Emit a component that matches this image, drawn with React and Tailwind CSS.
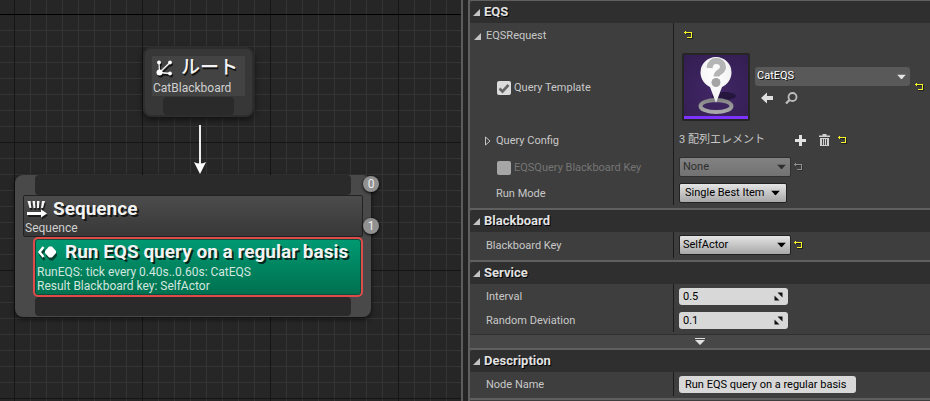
import React, { useState } from 'react';

const ResetIcon = ({ dim }) => (
  <svg width="9" height="8" viewBox="0 0 9 8" shapeRendering="crispEdges" className="block">
    <path d="M1 2h8v6H3V7h5V3H1z" fill="#111" opacity={dim ? 0.3 : 0.7} />
    <path d="M0 1h8v6H3V6h4V2H2v1H1V2H0zM1 0h1v1H1z" fill={dim ? '#8f8f8f' : '#f5f52a'} />
  </svg>
);

const ResetButton = ({ label, dim, className = '' }) => (
  <button type="button" aria-label={`Reset ${label}`} disabled={dim} className={`shrink-0 ${className}`}>
    <ResetIcon dim={dim} />
  </button>
);

const Caret = ({ color = '#000', className = '' }) => (
  <svg width="9" height="5" viewBox="0 0 9 5" className={`pointer-events-none absolute top-1/2 -translate-y-1/2 ${className}`}>
    <path d="M0 0h9L4.5 5z" fill={color} />
  </svg>
);

const OpenTriangle = () => (
  <svg width="7" height="7" viewBox="0 0 7 7" className="shrink-0">
    <path d="M7 0v7H0z" fill="#c4c4c4" />
  </svg>
);

const SpinIcon = () => (
  <svg width="9" height="9" viewBox="0 0 9 9" className="pointer-events-none absolute right-[5px] top-1">
    <path d="M3.5 0.5H8.5V5.5zM0.5 3.5V8.5H5.5z" fill="#111" />
  </svg>
);

// Collapsible category of the details panel
const Category = ({ title, children }) => {
  const [open, setOpen] = useState(true);
  return (
    <section className="border-b-2 border-[#5f5f5f]">
      <h2>
        <button
          type="button"
          aria-expanded={open}
          onClick={() => setOpen(!open)}
          className="flex h-[22px] w-full items-center gap-1 rounded-tl bg-[#2f2f2f] pl-[3px] text-left text-[13px] font-bold text-[#e2e2e2] [text-shadow:1px_1px_0_#000]"
        >
          <OpenTriangle />
          {title}
        </button>
      </h2>
      {open && children}
    </section>
  );
};

const Row = ({ label, height = 'h-6', children }) => (
  <div className={`grid grid-cols-[203fr_257fr] ${height}`}>
    <div className="flex items-center pt-[2px]">{label}</div>
    <div className="flex items-center border-l border-[#1c1c1c] pl-[5px]">{children}</div>
  </div>
);

const Dropdown = ({ id, label, value, disabled, width, pad = 'pl-[3px]' }) => (
  <div className={`relative h-5 ${width}`}>
    <select
      id={id}
      aria-label={label}
      disabled={disabled}
      defaultValue={value}
      className={`block h-5 w-full appearance-none rounded-[2px] border leading-[18px] ${pad} ${
        disabled
          ? 'border-[#303030] bg-linear-to-b from-[#828282] to-[#727272] text-[#2e2e2e]'
          : 'border-[#222] bg-linear-to-b from-[#e4e4e4] to-[#a8a8a8] text-black'
      }`}
    >
      <option>{value}</option>
    </select>
    <Caret color={disabled ? '#2e2e2e' : '#000'} className={pad === 'pl-[3px]' ? 'right-[5px]' : 'right-[7px]'} />
  </div>
);

const NumberBox = ({ id, value }) => (
  <div className="relative h-[17px] w-[109px]">
    <input id={id} type="text" defaultValue={value} className="block h-[17px] w-full rounded-[3px] bg-[#d8d8d8] pl-1 text-black" />
    <SpinIcon />
  </div>
);

const QueryThumbnail = () => (
  <svg width="68" height="68" viewBox="0 0 68 68" className="shrink-0">
    <defs>
      <radialGradient id="thumbBg" cx="0.5" cy="0.6" r="0.75">
        <stop offset="0" stopColor="#412766" />
        <stop offset="1" stopColor="#331e52" />
      </radialGradient>
      <radialGradient id="pin" cx="0.45" cy="0.4" r="0.7">
        <stop offset="0" stopColor="#fff" />
        <stop offset="0.7" stopColor="#f4f4f4" />
        <stop offset="1" stopColor="#cfcfcf" />
      </radialGradient>
      <linearGradient id="ring" x1="0" y1="0" x2="0" y2="1">
        <stop offset="0" stopColor="#858585" />
        <stop offset="1" stopColor="#a9a9a9" />
      </linearGradient>
    </defs>
    <rect width="68" height="68" rx="2" fill="#252525" />
    <rect x="2" y="2" width="64" height="61" fill="url(#thumbBg)" />
    <rect x="2" y="63" width="64" height="3" fill="#7c33ff" />
    <ellipse cx="42" cy="43" rx="12" ry="4" fill="#1e1231" opacity="0.75" />
    <ellipse cx="34" cy="53" rx="15.5" ry="6" fill="none" stroke="url(#ring)" strokeWidth="4" />
    <path d="M34 4a15.500 15.500 0 0 1 15.500 15.500c0 7-4.500 12-9.500 14.500L34 50L28 34c-5-2.500-9.500-7.500-9.500-14.500A15.500 15.500 0 0 1 34 4z" fill="url(#pin)" />
    <path d="M27.500 15c.5-5 3.500-7 6.500-7 4.500 0 7 2.500 7 6 0 5.500-6.500 4.500-6.500 9.500" fill="none" stroke="#b5b5b5" strokeWidth="6" />
    <circle cx="34" cy="29.500" r="4.500" fill="#a4a4a4" />
  </svg>
);

const RootIcon = () => (
  <svg width="17" height="16" viewBox="0 0 17 16" className="shrink-0 drop-shadow-[1px_2px_0_#111]">
    <path d="M3.500 12.500L3 2.500M3.500 12.500L14 2.500M3.500 12.500L14 13.500" stroke="#f4f4f4" strokeWidth="1.300" />
    <circle cx="3.500" cy="12.500" r="3" fill="#fff" />
    <circle cx="3" cy="2.500" r="1.900" fill="#fff" />
    <circle cx="14" cy="2.500" r="1.900" fill="#fff" />
    <circle cx="14" cy="13.500" r="1.900" fill="#fff" />
  </svg>
);

const SequenceIcon = () => (
  <svg width="20" height="18" viewBox="0 0 20 18" className="shrink-0 drop-shadow-[1px_2px_0_#1c1c1c]">
    <path d="M0.500 1h3l1 7H2.500zM5.500 1h2.500l.5 7h-2zM10 1h2.500l-.5 7h-2zM15 1h3l-2 7h-2z" fill="#f4f4f4" />
    <path d="M0 12h14V9.500L20 13.500L14 17.500V15H0z" fill="#fff" />
  </svg>
);

const ServiceIcon = () => (
  <svg width="20" height="14" viewBox="0 0 20 14" className="shrink-0 drop-shadow-[1px_3px_0_#04402f]">
    <path d="M6.500 2L2.500 7L6.500 12" stroke="#fff" strokeWidth="2.400" fill="none" />
    <path d="M12 1.500h3L19 6v2l-4 4.500h-3L8 8V6z" fill="#fff" />
  </svg>
);

const Slot = ({ className }) => <div className={`rounded bg-[#2a2a2a] ${className}`} />;

const IndexBadge = ({ children, className }) => (
  <span className={`absolute -right-2 flex size-4 items-center justify-center rounded-full bg-[#919191] text-xs text-[#eee] shadow-[0_1px_3px_#000] ${className}`}>
    {children}
  </span>
);

const Graph = () => (
  <main className="relative overflow-hidden bg-[#262626] bg-[linear-gradient(#151515_1px,transparent_1px),linear-gradient(90deg,#151515_1px,transparent_1px),linear-gradient(#343434_1px,transparent_1px),linear-gradient(90deg,#343434_1px,transparent_1px)] bg-[size:128px_128px,128px_128px,16px_16px,16px_16px] bg-[position:14px_14px]">
    <div className="absolute left-0 top-[14px] h-px w-full bg-black" />

    <article className="absolute left-[143px] top-[47px] w-[111px] rounded-lg border-2 border-[#2d2d2d] bg-[#373737] px-[7px] pt-[7px] shadow-[0_3px_6px_#0008]">
      <div className="h-10 bg-[#434343]">
        <h1 className="flex h-6 items-center gap-2 pl-1 text-[19px] font-medium text-[#f4f4f4] [text-shadow:1px_2px_0_#111]">
          <RootIcon />
          ルート
        </h1>
        <p className="pl-px text-xs leading-4 text-[#d0d0d0]">CatBlackboard</p>
      </div>
      <Slot className="mx-[11px] mt-px h-[18px]" />
    </article>

    <svg width="12" height="49" viewBox="0 0 12 49" className="absolute left-[194px] top-[125px]">
      <path d="M6 0v42" stroke="#eee" strokeWidth="2" />
      <path d="M0 37q6 3 12 0L6 49z" fill="#fff" />
    </svg>

    <article className="absolute left-[15px] top-[175px] w-[356px] rounded-lg bg-[#494949] px-2 shadow-[0_2px_5px_#000a]">
      <Slot className="mx-3 h-5" />
      <div className="h-[42px] rounded-[2px] border border-[#222] bg-linear-to-b from-[#4c4c4c] to-[#383838]">
        <h2 className="flex h-[26px] items-center gap-[6px] pl-[3px] text-[19px] font-bold text-[#f2f2f2] [text-shadow:2px_2px_0_#161616]">
          <SequenceIcon />
          Sequence
        </h2>
        <p className="pl-px text-xs leading-3 text-[#d0d0d0]">Sequence</p>
      </div>
      <div className="ml-[10px] h-[60px] rounded-[5px] border-2 border-[#e04a4a] bg-linear-to-b from-[#009a72] to-[#00704f] pl-[2px] shadow-[inset_0_0_0_1px_#06523c]">
        <h3 className="flex h-[26px] items-center gap-2 whitespace-nowrap text-[19px] font-bold text-[#f2f2f2] [text-shadow:2px_2px_0_#04281d]">
          <ServiceIcon />
          Run EQS query on a regular basis
        </h3>
        <p className="text-xs leading-[14px] text-[#d3e6df]">
          RunEQS: tick every 0.40s..0.60s: CatEQS
          <br />
          Result Blackboard key: SelfActor
        </p>
      </div>
      <Slot className="mx-3 mb-px h-[19px]" />
      <IndexBadge className="top-px">0</IndexBadge>
      <IndexBadge className="top-[43px]">1</IndexBadge>
    </article>
  </main>
);

const Details = () => (
  <aside className="border-l-2 border-[#5c5c5c] bg-[#242424] pl-[5px] text-[11px] text-[#c8c8c8]">
    <div className="h-full border-l-2 border-t border-[#5f5f5f] bg-[#3e3e3e]">
      <Category title="EQS">
        <Row
          label={
            <button type="button" aria-expanded="true" className="flex items-center gap-[5px] pl-1">
              <OpenTriangle />
              EQSRequest
            </button>
          }
        >
          <ResetButton label="EQSRequest" className="ml-[5px]" />
        </Row>
        <Row
          height="h-20"
          label={
            <label className="flex items-center gap-[3px] pl-[27px]">
              <span className="relative size-[14px]">
                <input type="checkbox" defaultChecked className="block size-[14px] appearance-none rounded-[2px] bg-[#dcdcdc]" />
                <svg width="14" height="14" viewBox="0 0 14 14" className="pointer-events-none absolute left-0 top-0">
                  <path d="M2.500 7.500L5.500 10.500L11.500 4" stroke="#666" strokeWidth="2.600" fill="none" />
                </svg>
              </span>
              Query Template
            </label>
          }
        >
          <div className="flex w-full items-center pl-[3px] pr-[6px]">
            <QueryThumbnail />
            <div className="ml-[5px] grow pb-[2px]">
              <div className="relative h-[19px]">
                <select aria-label="Query asset" className="block h-[19px] w-full appearance-none rounded-[3px] bg-[#595959] pl-[2px] text-white [text-shadow:1px_1px_0_#111]">
                  <option>CatEQS</option>
                </select>
                <Caret color="#e4e4e4" className="right-1" />
              </div>
              <div className="mt-[5px] flex gap-3 pl-[6px]">
                <button type="button" aria-label="Use selected asset">
                  <svg width="12" height="14" viewBox="0 0 12 14" className="block">
                    <path d="M0 7L6 1.500V5h6v4H6v3.500z" fill="#dedede" />
                  </svg>
                </button>
                <button type="button" aria-label="Browse to asset">
                  <svg width="13" height="14" viewBox="0 0 13 14" className="block" fill="none" stroke="#bcbcbc">
                    <circle cx="7.500" cy="6" r="4" strokeWidth="1.800" />
                    <path d="M4.500 9L1 12.500" strokeWidth="2.400" />
                  </svg>
                </button>
              </div>
            </div>
            <ResetButton label="Query Template" className="ml-[5px]" />
          </div>
        </Row>
        <Row
          height="h-[26px]"
          label={
            <button type="button" aria-expanded="false" className="flex items-center gap-[5px] pl-[15px]">
              <svg width="6" height="10" viewBox="0 0 6 10">
                <path d="M0.500 1L5 5L0.500 9z" fill="none" stroke="#c4c4c4" />
              </svg>
              Query Config
            </button>
          }
        >
          <span className="w-[116px]">3 配列エレメント</span>
          <button type="button" aria-label="Add element">
            <svg width="11" height="11" viewBox="0 0 11 11" className="block">
              <path d="M4 0h3v4h4v3H7v4H4V7H0V4h4z" fill="#e2e2e2" />
            </svg>
          </button>
          <button type="button" aria-label="Remove all elements" className="ml-[13px]">
            <svg width="11" height="12" viewBox="0 0 11 12" className="block">
              <path d="M0 1.500h3.500V0h4v1.500H11V3H0z" fill="#cfcfcf" />
              <path d="M1 4h9v8H1z" fill="#cfcfcf" />
              <path d="M3.500 5v6M5.500 5v6M7.500 5v6" stroke="#4a4a4a" />
            </svg>
          </button>
          <ResetButton label="Query Config" className="ml-2" />
        </Row>
        <Row
          height="h-7"
          label={
            <label className="flex items-center gap-[3px] pl-[27px] text-[#757575]">
              <input type="checkbox" disabled className="block size-[14px] appearance-none rounded-[2px] bg-[#a6a6a6]" />
              EQSQuery Blackboard Key
            </label>
          }
        >
          <Dropdown label="EQSQuery Blackboard Key" value="None" disabled width="w-28" />
          <ResetButton label="EQSQuery Blackboard Key" dim className="ml-[3px]" />
        </Row>
        <Row label={<label htmlFor="runMode" className="pl-[26px]">Run Mode</label>}>
          <Dropdown id="runMode" value="Single Best Item" width="w-[108px]" pad="pl-[5px]" />
        </Row>
        <div className="h-[3px]" />
      </Category>

      <Category title="Blackboard">
        <Row height="h-[26px]" label={<label htmlFor="blackboardKey" className="pl-4">Blackboard Key</label>}>
          <Dropdown id="blackboardKey" value="SelfActor" width="w-28" />
          <ResetButton label="Blackboard Key" className="ml-[3px]" />
        </Row>
        <div className="h-[2px]" />
      </Category>

      <Category title="Service">
        <Row label={<label htmlFor="interval" className="pl-4">Interval</label>}>
          <NumberBox id="interval" value="0.5" />
        </Row>
        <Row label={<label htmlFor="deviation" className="pl-4">Random Deviation</label>}>
          <NumberBox id="deviation" value="0.1" />
        </Row>
        <button
          type="button"
          aria-label="Show advanced"
          className="mt-[2px] flex h-[14px] w-full items-center justify-center border-t border-[#303030] bg-[#474747]"
        >
          <svg width="10" height="7" viewBox="0 0 10 7">
            <path d="M0 0h10v1H0zM0 2h10L5 7z" fill="#e0e0e0" />
          </svg>
        </button>
      </Category>

      <Category title="Description">
        <Row label={<label htmlFor="nodeName" className="pl-4">Node Name</label>}>
          <input
            id="nodeName"
            type="text"
            defaultValue="Run EQS query on a regular basis"
            className="block h-[17px] w-[177px] rounded-[3px] bg-[#d8d8d8] pl-[6px] text-black"
          />
        </Row>
        <div className="h-[2px]" />
      </Category>
    </div>
  </aside>
);

const App = () => (
  <div className="grid min-h-screen grid-cols-[461fr_469fr] font-[Roboto,'Noto_Sans_CJK_JP',sans-serif]">
    <Graph />
    <Details />
  </div>
);

export default App;
